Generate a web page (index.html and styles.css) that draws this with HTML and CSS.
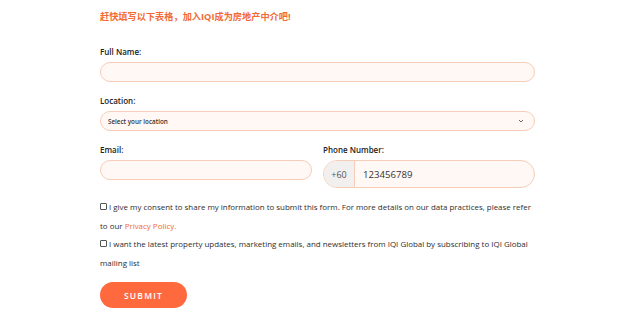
FILE: index.html
```html
<!DOCTYPE html>
<html>
<head>
<meta charset="utf-8">
<link rel="stylesheet" href="styles.css">
</head>
<body>
<form class="form">
  <h2 class="title">赶快填写以下表格，加入IQI成为房地产中介吧!</h2>
  <div class="field first">
    <label class="label">Full Name:</label>
    <div class="input"></div>
  </div>
  <div class="field">
    <label class="label">Location:</label>
    <div class="input select"><span>Select your location</span>
      <svg class="chev" width="6" height="4" viewBox="0 0 6 4"><path d="M1 1l2 2 2-2" fill="none" stroke="#555" stroke-width="0.9"/></svg>
    </div>
  </div>
  <div class="row">
    <div class="field col">
      <label class="label">Email:</label>
      <div class="input"></div>
    </div>
    <div class="field col">
      <label class="label">Phone Number:</label>
      <div class="input phone"><span class="prefix">+60</span><span class="num">123456789</span></div>
    </div>
  </div>
  <div class="checks">
    <p class="check"><span class="box"></span>I give my consent to share my information to submit this form. For more details on our data practices, please refer to our <a class="link">Privacy Policy.</a></p>
    <p class="check"><span class="box"></span>I want the latest property updates, marketing emails, and newsletters from IQI Global by subscribing to IQI Global mailing list</p>
  </div>
  <button class="submit" type="button">SUBMIT</button>
</form>
</body>
</html>
```
FILE: styles.css
```css
html, body { margin: 0; padding: 0; background: #fff; }
body { font-family: "Open Sans", "Noto Sans CJK SC", sans-serif; color: #2b2b2b; }
.form { width: 435px; margin-left: 100px; padding-top: 10px; }
.title { margin: 0; font-size: 9.2px; font-weight: 700; color: #f26a35; line-height: 14px; font-family: "Open Sans", "Noto Sans CJK SC", sans-serif; }
.field { display: flex; flex-direction: column; margin-top: 14px; }
.field.first { margin-top: 23px; }
.label { font-size: 8px; font-weight: 600; line-height: 10px; margin-bottom: 5px; color: #222; }
.input { height: 18px; border: 1px solid #f6cdb8; background: #fff8f5; border-radius: 12px; box-sizing: content-box; }
.select { display: flex; align-items: center; justify-content: space-between; padding: 0 10px 0 7px; font-size: 6.3px; font-weight: 600; color: #333; }
.row { display: flex; gap: 11px; margin-top: 14px; }
.col { flex: 1; margin-top: 0; }
.phone { height: 26px; display: flex; align-items: center; overflow: hidden; border-radius: 15px; font-size: 9.6px; color: #333; }
.prefix { width: 30px; align-self: stretch; display: flex; align-items: center; justify-content: center; background: #f1f0ef; border-right: 1px solid #f6cdb8; color: #555; font-size: 9px; }
.num { padding-left: 8px; }
.checks { margin-top: 10px; }
.check { margin: 0; font-size: 7.95px; line-height: 18.5px; color: #2e2e2e; }
.box { display: inline-block; width: 5px; height: 5px; border: 0.8px solid #555; border-radius: 1px; margin-right: 2px; vertical-align: 0px; }
.link { display: inline-block; color: #f26a35; line-height: 10px; }
.submit { display: block; margin-top: 10px; width: 87px; height: 26px; border: none; border-radius: 13px; background: #fe6a3d; color: #fff; font-family: "Open Sans", sans-serif; font-size: 8.5px; font-weight: 600; letter-spacing: 1.2px; }
```
